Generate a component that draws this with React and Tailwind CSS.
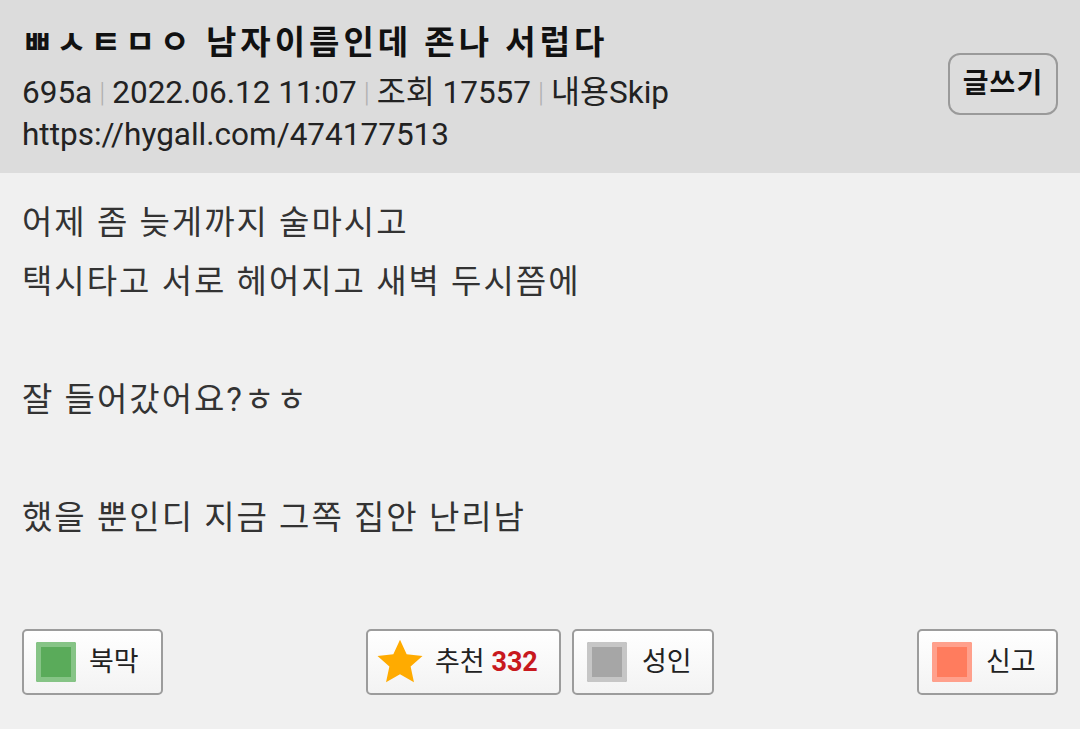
import React from 'react';

const font = { fontFamily: 'Roboto, "Noto Sans CJK KR", sans-serif' };

function Square({ fill, edge }) {
  return (
    <span
      className="inline-block shrink-0 w-[40px] h-[40px] rounded-[2px]"
      style={{ backgroundColor: fill, boxShadow: `inset 0 0 0 5px ${edge}` }}
    />
  );
}

function Btn({ children, className = '' }) {
  return (
    <button
      className={`h-[66px] flex items-center whitespace-nowrap rounded-[5px] border-2 border-[#9c9c9c] bg-gradient-to-b from-white to-[#f3f3f3] text-[27px] text-[#222] ${className}`}
    >
      {children}
    </button>
  );
}

export default function App() {
  return (
    <div className="w-[1080px] h-[729px] bg-[#f0f0f0] flex flex-col overflow-hidden" style={font}>
      {/* 상단 헤더 */}
      <header className="bg-[#dcdcdc] h-[173px] px-[22px] pt-[20px] flex justify-between">
        <div className="flex flex-col">
          <h1 className="text-[33px] leading-[46px] font-bold tracking-[4px] text-[#111] whitespace-nowrap">
            ㅃㅅㅌㅁㅇ 남자이름인데 존나 서럽다
          </h1>
          <div className="mt-[6px] text-[31.5px] leading-[42px] text-[#222] flex items-center whitespace-nowrap">
            <span>695a</span>
            <span className="mx-[7px] text-[#b0b0b0] text-[27px] font-light">|</span>
            <span>2022.06.12 11:07</span>
            <span className="mx-[7px] text-[#b0b0b0] text-[27px] font-light">|</span>
            <span>조회 17557</span>
            <span className="mx-[7px] text-[#b0b0b0] text-[27px] font-light">|</span>
            <span>내용Skip</span>
          </div>
          <div className="text-[31.5px] leading-[42px] text-[#222]">https://hygall.com/474177513</div>
        </div>
        <div className="pt-[33px]">
          <button className="w-[110px] h-[62px] rounded-[12px] border-2 border-[#9a9a9a] text-[28px] font-bold tracking-[1px] text-[#111]">
            글쓰기
          </button>
        </div>
      </header>

      {/* 본문 */}
      <main className="px-[22px] pt-[20px] text-[33px] leading-[59px] tracking-[2px] text-[#333]">
        <p>어제 좀 늦게까지 술마시고</p>
        <p>택시타고 서로 헤어지고 새벽 두시쯤에</p>
        <p>&nbsp;</p>
        <p>잘 들어갔어요?ㅎㅎ</p>
        <p>&nbsp;</p>
        <p>했을 뿐인디 지금 그쪽 집안 난리남</p>
      </main>

      {/* 하단 버튼 */}
      <div className="mt-auto mb-[34px] px-[22px] flex justify-between items-center">
        <Btn className="w-[141px] pl-[12px] gap-[13px]">
          <Square fill="#5aab5a" edge="#86c486" />
          <span>북막</span>
        </Btn>
        <div className="flex gap-[11px]">
          <Btn className="w-[195px] pl-[7px] gap-[10px]">
            <svg width="50" height="48" viewBox="0 0 24 23">
              <path
                d="M12 0.8l3.2 7 7.6.8-5.7 5.1 1.6 7.5L12 17.4l-6.7 3.8 1.6-7.5L1.2 8.6l7.6-.8z"
                fill="#ffab00"
              />
            </svg>
            <span>
              추천 <span className="font-bold text-[#c8191e]">332</span>
            </span>
          </Btn>
          <Btn className="w-[142px] pl-[13px] gap-[15px]">
            <Square fill="#a6a6a6" edge="#c6c6c6" />
            <span>성인</span>
          </Btn>
        </div>
        <Btn className="w-[141px] pl-[13px] gap-[14px]">
          <Square fill="#ff7c5e" edge="#ffa08c" />
          <span>신고</span>
        </Btn>
      </div>
    </div>
  );
}
